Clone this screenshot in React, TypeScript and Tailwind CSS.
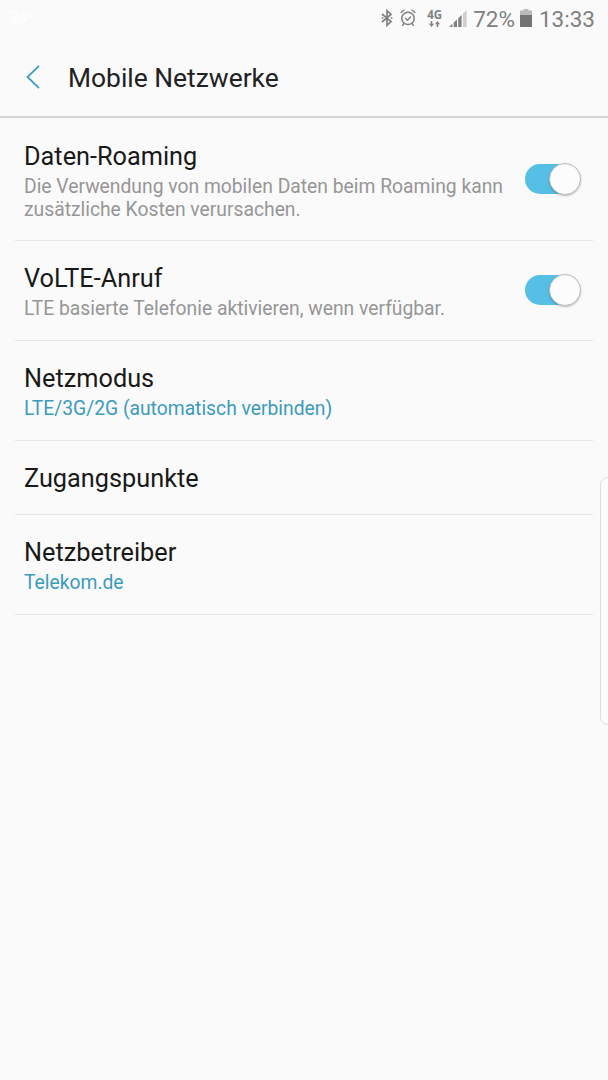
import type { ReactNode } from "react"

type Setting = {
  title: string
  summary?: ReactNode
  accent?: boolean
  enabled?: boolean
}

const settings: Setting[] = [
  {
    title: "Daten-Roaming",
    summary: (
      <>
        Die Verwendung von mobilen Daten beim Roaming kann
        <br />
        zusätzliche Kosten verursachen.
      </>
    ),
    enabled: true,
  },
  {
    title: "VoLTE-Anruf",
    summary: "LTE basierte Telefonie aktivieren, wenn verfügbar.",
    enabled: true,
  },
  {
    title: "Netzmodus",
    summary: "LTE/3G/2G (automatisch verbinden)",
    accent: true,
  },
  { title: "Zugangspunkte" },
  { title: "Netzbetreiber", summary: "Telekom.de", accent: true },
]

function BluetoothIcon() {
  return (
    <svg className="w-3 h-[18px]" viewBox="0 0 12 18" fill="none" stroke="currentColor" strokeWidth="1.7">
      <path d="M1 5 L10 12.6 L6 16.3 V1.7 L10 5.4 L1 13" />
      <path d="M0.6 9 H2.4 M9.6 9 H11.4" />
    </svg>
  )
}

function AlarmIcon() {
  return (
    <svg className="w-4 h-[18px]" viewBox="0 0 16 18" fill="none" stroke="currentColor" strokeWidth="1.5">
      <circle cx="8" cy="9.4" r="6.2" />
      <path d="M5.2 9 L7.5 11.2 L11 7.6" />
      <path d="M0.8 3.8 Q2 1.8 4.5 1.1 M15.2 3.8 Q14 1.8 11.5 1.1" />
      <path d="M4 14.2 L2.4 17 M12 14.2 L13.6 17" />
    </svg>
  )
}

function DataArrows() {
  return (
    <svg className="w-[11px] h-[6px]" viewBox="0 0 11 6" fill="currentColor">
      <path d="M1.7 0 H3.3 V2.8 H5 L2.5 6 L0 2.8 H1.7 Z" />
      <path d="M7.7 6 H9.3 V3.2 H11 L8.5 0 L6 3.2 H7.7 Z" />
    </svg>
  )
}

function SignalIcon() {
  return (
    <svg className="w-[18px] h-[17px]" viewBox="0 0 18 17" fill="currentColor">
      <path d="M0 17 L3.4 13.8 V17 Z" />
      <path d="M4.7 12.6 L8 9.4 V17 H4.7 Z" />
      <path d="M9.2 8.3 L12.6 5 V17 H9.2 Z" />
      <path d="M14 3.6 L17.6 0 V17 H14 Z" fill="#cfcfcf" />
    </svg>
  )
}

function BatteryIcon() {
  return (
    <svg className="w-3 h-[18px]" viewBox="0 0 12 18">
      <path d="M0 1.5 H3.5 V0 H8.5 V1.5 H12 V6 H0 Z" fill="#b9b9b9" />
      <path d="M0 6 H12 V18 H0 Z" fill="#747474" />
    </svg>
  )
}

function StatusBar() {
  return (
    <div className="flex h-[38px] items-start text-[#808080]">
      <span className="ml-[9px] mt-2 text-[16px] leading-5 text-white">24º</span>
      <div className="ml-auto flex items-start pr-[13px]">
        <div className="mt-[9px]">
          <BluetoothIcon />
        </div>
        <div className="ml-[7px] mt-[9px]">
          <AlarmIcon />
        </div>
        <div className="ml-[11px] mt-[9px] flex w-[15px] flex-col items-center">
          <span className="font-['Open_Sans',sans-serif] text-[11.5px] leading-[11px] font-bold">4G</span>
          <div className="mt-px">
            <DataArrows />
          </div>
        </div>
        <div className="ml-[7px] mt-[10px]">
          <SignalIcon />
        </div>
        <span className="ml-[6px] mt-[7px] text-[22.5px] leading-6">72%</span>
        <div className="ml-[5px] mt-[9px]">
          <BatteryIcon />
        </div>
        <span className="ml-[7px] mt-[7px] text-[22.5px] leading-6">13:33</span>
      </div>
    </div>
  )
}

function Header() {
  return (
    <header className="flex h-20 items-center border-b-2 border-[#d3d5d5] pl-[26px]">
      <svg className="h-6 w-[14px]" viewBox="0 0 14 24" fill="none" stroke="#3b9fc3" strokeWidth="1.8">
        <path d="M13 0.8 L1.5 12 L13 23.2" />
      </svg>
      <h1 className="ml-7 pt-0.5 text-[26.4px] leading-8 text-[#212121]">Mobile Netzwerke</h1>
    </header>
  )
}

function Switch() {
  return (
    <div className="mb-1 flex h-[30px] w-[54px] items-center justify-end rounded-full bg-[#56bfe5]">
      <div className="-mr-[2px] size-8 shrink-0 rounded-full border border-[#bcbcbc] bg-[#fcfcfc] shadow-[0_1px_2px_rgba(0,0,0,0.25)]" />
    </div>
  )
}

function SettingRow({ title, summary, accent, enabled }: Setting) {
  return (
    <li className="mx-[15px] flex items-center justify-between border-b border-[#e6e6e6] pt-[21px] pr-[14px] pb-[19px] pl-[9px] first:pt-[22px] first:pb-[18px]">
      <div>
        <h2 className="text-[25.3px] leading-[33px] text-[#191919]">{title}</h2>
        {summary && (
          <p className={`mt-[2px] mb-px text-[19.3px] leading-[23px] whitespace-nowrap ${accent ? "text-[#3b9bbd]" : "text-[#969696]"}`}>
            {summary}
          </p>
        )}
      </div>
      {enabled && <Switch />}
    </li>
  )
}

export default function App() {
  return (
    <div className="relative h-[1080px] w-[608px] overflow-hidden bg-[#fafafa] font-[Roboto,sans-serif]">
      <StatusBar />
      <Header />
      <ul>
        {settings.map((setting) => (
          <SettingRow key={setting.title} {...setting} />
        ))}
      </ul>
      {/* edge panel handle */}
      <div className="absolute top-[477px] -right-2 h-[248px] w-4 rounded-lg border border-[#dedede] bg-[#fcfcfc]" />
    </div>
  )
}
